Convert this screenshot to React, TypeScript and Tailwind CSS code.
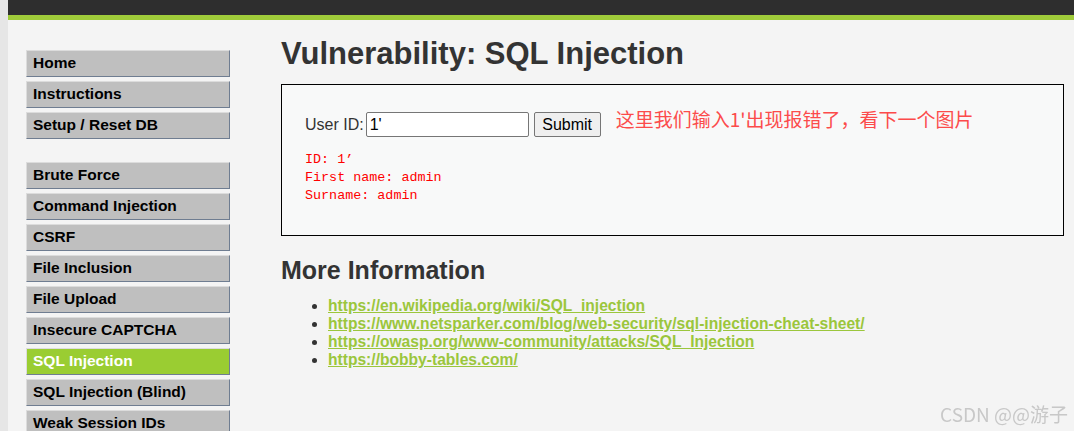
import React from 'react';

const menuTop = ['Home', 'Instructions', 'Setup / Reset DB'];
const menuVulns = [
  'Brute Force',
  'Command Injection',
  'CSRF',
  'File Inclusion',
  'File Upload',
  'Insecure CAPTCHA',
  'SQL Injection',
  'SQL Injection (Blind)',
  'Weak Session IDs',
];

const links = [
  'https://en.wikipedia.org/wiki/SQL_injection',
  'https://www.netsparker.com/blog/web-security/sql-injection-cheat-sheet/',
  'https://owasp.org/www-community/attacks/SQL_Injection',
  'https://bobby-tables.com/',
];

function MenuItem({ label, active }: { label: string; active?: boolean }) {
  return (
    <li
      className={`h-[27px] w-[204px] border border-t-[#dcdcdc] border-l-[#dcdcdc] border-r-[#6f7d91] border-b-[#6f7d91] pl-[6px] text-[15.5px] leading-[24px] font-bold ${
        active ? 'bg-[#9acd32] text-white border-t-[#7b8ca3] border-l-[#7b8ca3]' : 'bg-[#bfbfbf] text-black'
      }`}
    >
      {label}
    </li>
  );
}

export default function App() {
  return (
    <div className="h-[431px] w-[1074px] overflow-hidden bg-[#e6e6e6] font-['Liberation_Sans',Arial,sans-serif]">
      <div className="ml-[8px] h-full bg-[#f4f4f4]">
        <div className="h-[15px] bg-[#2e2e2e]" />
        <div className="h-[5px] bg-[#9fcb3a]" />
        <div className="flex">
          <div className="w-[273px] shrink-0 pl-[18px] pt-[30px]">
            <ul className="flex flex-col gap-[4px]">
              {menuTop.map((m) => (
                <MenuItem key={m} label={m} />
              ))}
            </ul>
            <ul className="mt-[23px] flex flex-col gap-[4px]">
              {menuVulns.map((m) => (
                <MenuItem key={m} label={m} active={m === 'SQL Injection'} />
              ))}
            </ul>
          </div>
          <div className="flex-1 pr-[10px]">
            <h1 className="mt-[16px] text-[31px] leading-[36px] font-bold text-[#333]">Vulnerability: SQL Injection</h1>
            <div className="mt-[12px] h-[152px] border border-black bg-[#f8f9f9] pl-[23px] pt-[27px]">
              <div className="flex items-center text-[16px] text-[#333]">
                <span>User ID:</span>
                <input
                  readOnly
                  value="1'"
                  className="ml-[2px] h-[25px] w-[163px] rounded-[2px] border border-[#767676] bg-white px-[3px] text-[16px] text-black outline-none"
                />
                <button className="ml-[5px] h-[25px] w-[67px] rounded-[2px] border border-[#767676] bg-[#efefef] text-[16px] text-black">
                  Submit
                </button>
                <span className="ml-[15px] -mt-[10px] font-['Noto_Sans_CJK_SC',sans-serif] text-[19px] text-[#fc4b4b]">
                  这里我们输入1'出现报错了，看下一个图片
                </span>
              </div>
              <pre className="mt-[14px] font-['Liberation_Mono',monospace] text-[13.4px] leading-[18px] text-[#ff0000]">
                {"ID: 1’\nFirst name: admin\nSurname: admin"}
              </pre>
            </div>
            <h2 className="mt-[19px] text-[25px] leading-[30px] font-bold text-[#333]">More Information</h2>
            <ul className="mt-[12px] list-disc pl-[47px] text-[#333] marker:text-[#333]">
              {links.map((l) => (
                <li key={l} className="text-[15.6px] leading-[18px]">
                  <a className="font-bold text-[#9bc63c] underline">{l}</a>
                </li>
              ))}
            </ul>
          </div>
        </div>
      </div>
      <div className="pointer-events-none fixed right-[6px] top-[400px] text-[19px] text-[#c8c8c8] font-['Noto_Sans_CJK_SC',sans-serif]">
        CSDN @@游子
      </div>
    </div>
  );
}
